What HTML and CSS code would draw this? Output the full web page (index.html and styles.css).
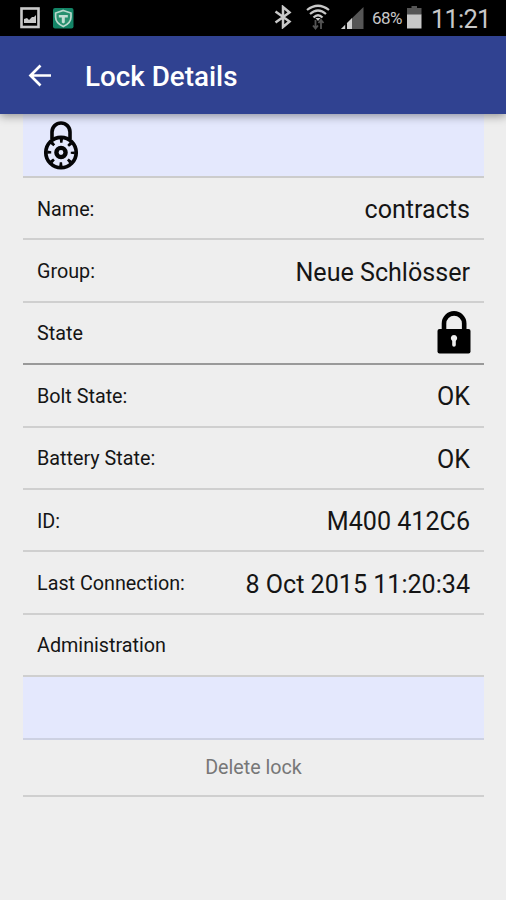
FILE: index.html
```html
<!DOCTYPE html>
<html lang="en">
<head>
<meta charset="utf-8">
<title>Lock Details</title>
<link rel="stylesheet" href="styles.css">
</head>
<body>
<div class="status">
  <svg class="i-pic" width="20" height="22" viewBox="0 0 20 22"><rect x="1.500" y="1.500" width="17" height="18.500" fill="#000" stroke="#c9c9c9" stroke-width="2.600"/><path d="M4 16v-4l3-1 2 2 3-3h2l2-2v8z" fill="#c9c9c9"/></svg>
  <svg class="i-shield" width="21" height="21" viewBox="0 0 21 21"><rect width="20.500" height="20.500" rx="2" fill="#138466"/><path d="M10.300 2.500L18 5v4c0 4.500-3.200 7.500-7.700 9.500C5.800 16.500 2.600 13.500 2.600 9V5z" fill="#28906f" stroke="#b9d8cc" stroke-width="1.700"/><path d="M5.800 7h9v2.500h-3v5l-1.500 1-1.500-1v-5h-3z" fill="#c3ded4"/></svg>
  <span class="gap"></span>
  <svg class="i-bt" width="18" height="24" viewBox="0 0 18 24"><path d="M1.500 6.500l14 10L9 22V2l6.500 5.500-14 10" fill="none" stroke="#c8c8c8" stroke-width="2.500"/></svg>
  <svg class="i-wifi" width="24" height="26" viewBox="0 0 24 26"><g fill="none" stroke="#c8c8c8" stroke-width="2.200"><path d="M1 6Q12-2.500 23 6"/><path d="M4 10Q12 3 20 10"/><path d="M7.500 13.500Q12 9 16.500 13.500"/></g><path d="M9.500 14h5L12 17z" fill="#c8c8c8"/><path d="M9.500 16v8M7 21.500l2.500 3 2.500-3M15 25v-8M12.500 19l2.500-3 2.500 3" fill="none" stroke="#555" stroke-width="1.800"/></svg>
  <svg class="i-sig" width="23" height="22" viewBox="0 0 23 22"><path d="M0 22L22.500 0v22z" fill="#565656"/><path d="M0 22l4-4v4zM6 22v-6l5-5v11z" fill="#d0d0d0"/><path d="M4.500 17.500l1.500-1.500v6H4.500z" fill="#000"/></svg>
  <span class="pct">68%</span>
  <svg class="i-bat" width="15" height="23" viewBox="0 0 15 23"><path d="M4.500 0h5.500v2H14.500v7H0V2h4.500z" fill="#555"/><rect y="8.500" width="14.500" height="14" fill="#c8c8c8"/></svg>
  <span class="clock">11:21</span>
</div>
<header class="bar">
  <svg width="24" height="24" viewBox="0 0 24 24"><path d="M23 11.500H2.500M12.500 1.500l-10 10 10 10" fill="none" stroke="#fff" stroke-width="2.700"/></svg>
  <h1>Lock Details</h1>
</header>
<main class="list">
  <div class="row tint first">
    <svg width="36" height="49" viewBox="0 0 36 49"><g fill="none" stroke="#050507"><path d="M9 18V11a9 9 0 0 1 18 0v7" stroke-width="3.600"/><circle cx="18" cy="31.500" r="15.200" stroke-width="3.700"/><circle cx="18" cy="31.500" r="4.600" stroke-width="4.400"/><circle cx="18" cy="31.500" r="11.800" stroke-width="4" stroke-dasharray="2.900 6.367" stroke-dashoffset="1.450"/></g></svg>
  </div>
  <div class="row"><span class="label">Name:</span><span class="value">contracts</span></div>
  <div class="row"><span class="label">Group:</span><span class="value">Neue Schlösser</span></div>
  <div class="row dark"><span class="label">State</span>
    <svg class="lock" width="34" height="43" viewBox="0 0 34 43"><path d="M7 20V12.500a10.100 10.100 0 0 1 20.200 0V20" fill="none" stroke="#000" stroke-width="4.600"/><rect x=".5" y="18" width="33" height="24.500" rx="2" fill="#000"/><path d="M17 24a3.300 3.300 0 0 1 1.800 6v4a1.800 1.800 0 0 1-3.600 0v-4A3.300 3.300 0 0 1 17 24z" fill="#eee"/></svg>
  </div>
  <div class="row"><span class="label">Bolt State:</span><span class="value">OK</span></div>
  <div class="row"><span class="label">Battery State:</span><span class="value">OK</span></div>
  <div class="row"><span class="label">ID:</span><span class="value">M400 412C6</span></div>
  <div class="row"><span class="label">Last Connection:</span><span class="value">8 Oct 2015 11:20:34</span></div>
  <div class="row"><span class="label">Administration</span></div>
  <div class="row tint"></div>
  <div class="row delete">Delete lock</div>
</main>
</body>
</html>
```
FILE: styles.css
```css
* { box-sizing: border-box; }
body {
  margin: 0;
  height: 900px;
  overflow: hidden;
  background: #eee;
  color: #151515;
  font-family: Roboto, "Liberation Sans", sans-serif;
}
.status {
  display: flex;
  height: 36px;
  padding: 0 16px 0 20px;
  background: #000;
  color: #c8c8c8;
}
.status svg { flex: none; }
.gap { flex: 1; }
.i-pic { margin-top: 7px; }
.i-shield { margin: 8px 0 0 13px; }
.i-bt { margin: 5px 14px 0 0; }
.i-wifi { margin: 4px 11px 0 0; }
.i-sig { margin: 7px 8px 0 0; }
.pct { width: 32px; margin-right: 3px; font-size: 17px; line-height: 37px; letter-spacing: -.5px; white-space: nowrap; }
.i-bat { margin: 6px 9px 0 0; }
.clock { width: 59px; font-size: 25.500px; line-height: 38px; letter-spacing: -.8px; white-space: nowrap; }
.bar {
  position: relative;
  display: flex;
  align-items: center;
  height: 78px;
  padding: 1px 0 0 28px;
  background: #304291;
  box-shadow: 0 2px 9px rgba(0, 0, 0, .4);
}
.bar h1 {
  margin: 1px 0 0 33px;
  color: #fff;
  font-size: 27.800px;
  font-weight: 500;
}
.list { margin: 0 22px 0 23px; }
.row {
  display: flex;
  align-items: center;
  justify-content: space-between;
  height: 62.400px;
  padding: 1px 14px 0;
  border-bottom: 2px solid #cfcfcf;
}
.row.dark { border-bottom-color: #999; }
.row.tint { background: #e4e8fd; border-bottom-color: #cdd1e2; }
.row.first { height: 64px; padding: 0 20px; align-items: flex-start; border-bottom-color: #ccc; }
.first svg { margin-top: 7px; }
.lock { margin: -2px -1px 0 0; }
.label { padding-top: 1px; font-size: 19.750px; }
.value { padding-top: 2px; font-size: 25.100px; }
.row.delete { justify-content: center; height: 57.500px; padding-top: 0; color: #777; font-size: 19.700px; }
```
